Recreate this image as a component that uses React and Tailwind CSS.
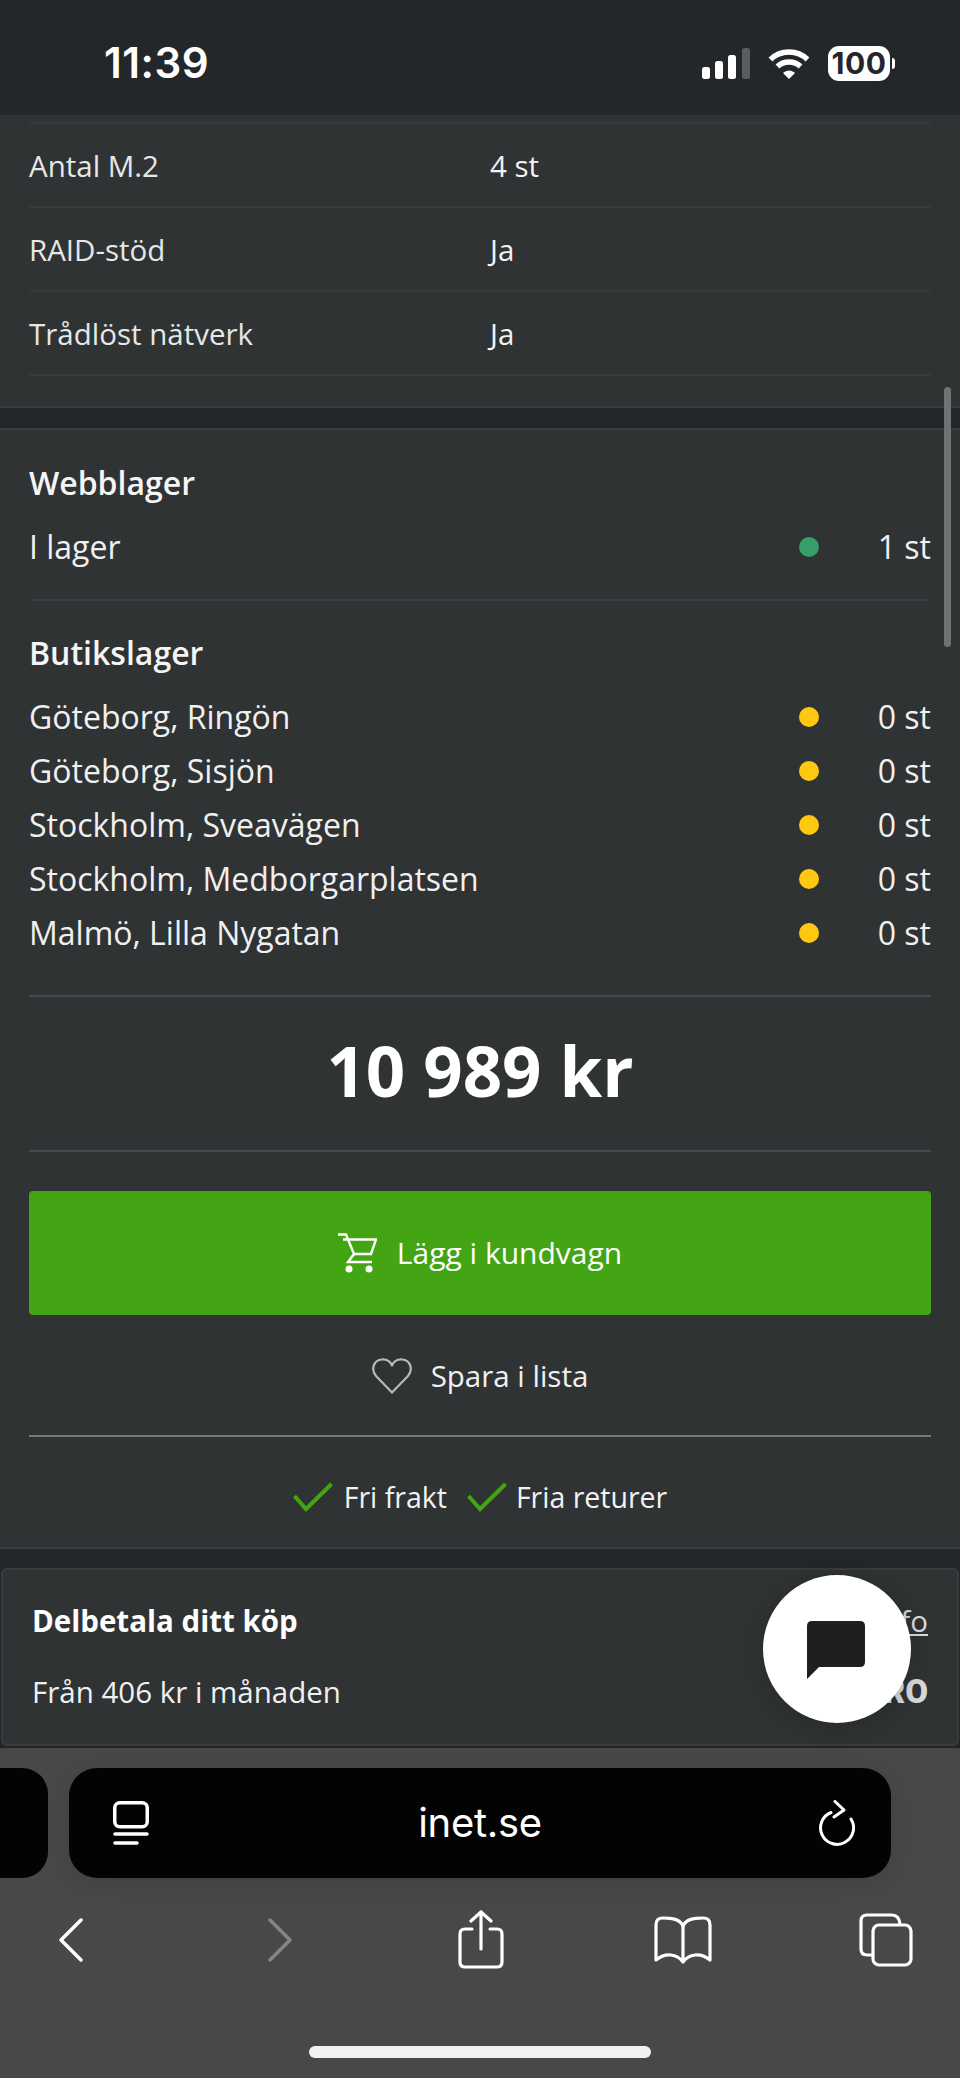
import React from "react";

const SPECS = [
  { label: "Antal M.2", value: "4 st" },
  { label: "RAID-stöd", value: "Ja" },
  { label: "Trådlöst nätverk", value: "Ja" },
];

const STORES = [
  "Göteborg, Ringön",
  "Göteborg, Sisjön",
  "Stockholm, Sveavägen",
  "Stockholm, Medborgarplatsen",
  "Malmö, Lilla Nygatan",
];

/* ================= STATUS BAR ================= */
const StatusBar = () => (
  <div className="h-[115px] shrink-0 bg-[#242729] flex items-start justify-between pl-[104px] pr-[65px] pt-[36px] font-['Inter',sans-serif] text-white">
    <span className="text-[42px] leading-[54px] font-semibold tracking-[0.5px]">11:39</span>
    <div className="flex items-center mt-[10px]">
      <svg width="48" height="32" viewBox="0 0 48 32" fill="#fff">
        <rect x="0" y="19" width="8" height="12" rx="2.5" />
        <rect x="13" y="13" width="8" height="18" rx="2.5" />
        <rect x="26" y="7" width="8" height="24" rx="2.5" />
        <rect x="40" y="0" width="8" height="31" rx="2.5" fill="#5a5c5e" />
      </svg>
      <svg className="ml-[18px]" width="42" height="32" viewBox="0 0 42 32" fill="none" stroke="#fff" strokeWidth="5.5">
        <path d="M2.5 11.5C12.5 1.5 29.5 1.5 39.5 11.5" />
        <path d="M9.5 18.5C15.5 12.5 26.5 12.5 32.5 18.5" />
        <path d="M15 25L21 31L27 25C23.5 21.5 18.5 21.5 15 25Z" fill="#fff" stroke="none" />
      </svg>
      <div className="ml-[18px] w-[62px] h-[35px] rounded-[11px] bg-white text-[#242729] flex items-center justify-center text-[30px] font-bold tracking-[0.5px]">
        100
      </div>
      <div className="ml-[2px] w-[3px] h-[11px] bg-white rounded-r-full" />
    </div>
  </div>
);

/* ================= STOCK ================= */
const StockRow = ({ name, qty, dot }) => (
  <div className="flex items-center h-[54px] text-[32px] text-[#f0f0f0]">
    <span className="flex-1">{name}</span>
    <span className={`w-5 h-5 rounded-full ${dot}`} />
    <span className="w-[112px] text-right">{qty}</span>
  </div>
);

/* ================= BROWSER CHROME ================= */
const BrowserBar = () => (
  <div className="h-[330px] shrink-0 bg-[#48484a] pt-[20px]">
    <div className="flex items-stretch h-[110px]">
      <div className="w-[48px] rounded-r-[26px] bg-[#030304]" />
      <div className="ml-[21px] w-[822px] rounded-[28px] bg-[#030304] flex items-center justify-between pl-[44px] pr-[36px] shadow-[0_4px_24px_rgba(0,0,0,0.12)]">
        <svg width="36" height="44" viewBox="0 0 36 44" fill="none" stroke="#fff" strokeWidth="3.5" strokeLinecap="round">
          <rect x="1.75" y="1.75" width="32.5" height="24" rx="5" />
          <path d="M2 33H34" />
          <path d="M2 42H24" />
        </svg>
        <span className="text-[40px] text-white font-['Inter',sans-serif] tracking-[-0.3px] -translate-x-[4px]">inet.se</span>
        <svg width="36" height="46" viewBox="0 0 36 46" fill="none" stroke="#fff" strokeWidth="3" strokeLinecap="round" strokeLinejoin="round">
          <path d="M12 12.5A16.5 16.5 0 1 0 32 19" />
          <path d="M16 1.5L25 10L15 17" />
        </svg>
      </div>
    </div>

    <div className="flex items-center h-[60px] mt-[32px] pl-[59px]">
      <svg width="24" height="44" viewBox="0 0 24 44" fill="none" stroke="#fff" strokeWidth="3.5" strokeLinecap="round" strokeLinejoin="round">
        <path d="M22 2L2 22L22 42" />
      </svg>
      <svg className="ml-[185px]" width="24" height="44" viewBox="0 0 24 44" fill="none" stroke="#858587" strokeWidth="3.5" strokeLinecap="round" strokeLinejoin="round">
        <path d="M2 2L22 22L2 42" />
      </svg>
      <svg className="ml-[166px]" width="46" height="60" viewBox="0 0 46 60" fill="none" stroke="#fff" strokeWidth="3.2" strokeLinecap="round" strokeLinejoin="round">
        <path d="M14 19H7Q2 19 2 24V52Q2 57 7 57H39Q44 57 44 52V24Q44 19 39 19H32" />
        <path d="M23 39V2" />
        <path d="M13 11L23 2L33 11" />
      </svg>
      <svg className="ml-[150px]" width="58" height="48" viewBox="0 0 58 48" fill="none" stroke="#fff" strokeWidth="3.2" strokeLinecap="round" strokeLinejoin="round">
        <path d="M29 10C26 3 18 2 9 2Q2 2 2 9V44C12 36 23 38 29 46C35 38 46 36 56 44V9Q56 2 49 2C40 2 32 3 29 10Z" />
        <path d="M29 10V45" />
      </svg>
      <svg className="ml-[147px]" width="54" height="54" viewBox="0 0 54 54" fill="none" stroke="#fff" strokeWidth="3.2" strokeLinejoin="round">
        <path d="M13 42H8Q2 42 2 36V8Q2 2 8 2H33Q40 2 41 11" />
        <rect x="14" y="12" width="38" height="40" rx="6" />
      </svg>
    </div>

    <div className="mt-[76px] mx-auto w-[342px] h-[12px] rounded-full bg-[#f2f2f2]" />
  </div>
);

/* ================= MAIN ================= */
const App = () => (
  <div className="relative w-[960px] h-[2078px] overflow-hidden bg-[#242729] font-['Open_Sans',sans-serif] text-[29.5px] flex flex-col">
    <StatusBar />

    {/* SPECS */}
    <div className="h-[293px] shrink-0 bg-[#303334] border-b-2 border-[#3a3d3f] px-[29px] pt-[7px]">
      <div className="border-t-2 border-[#383b3c]">
        {SPECS.map((spec) => (
          <div key={spec.label} className="h-[84px] pt-[2px] flex items-center border-b-2 border-[#383b3c] text-[#e6e7e7]">
            <span className="w-[461px]">{spec.label}</span>
            <span className="text-[#f2f2f2]">{spec.value}</span>
          </div>
        ))}
      </div>
    </div>

    <div className="h-[20px] shrink-0" />

    {/* STOCK + BUY */}
    <div className="h-[1121px] shrink-0 bg-[#303334] border-y-2 border-[#3a3d3f] px-[29px] pt-[33px]">
      <h3 className="h-[40px] leading-[40px] text-[32px] font-semibold text-[#f5f5f5]">Webblager</h3>
      <div className="mt-[17px]">
        <StockRow name="I lager" qty="1 st" dot="bg-[#35a06a]" />
      </div>
      <div className="mt-[25px] border-t-2 border-[#3a3d3f] pt-[32px]">
        <h3 className="h-[40px] leading-[40px] text-[32px] font-semibold text-[#f5f5f5]">Butikslager</h3>
      </div>
      <div className="mt-[17px]">
        {STORES.map((store) => (
          <StockRow key={store} name={store} qty="0 st" dot="bg-[#fdc80f]" />
        ))}
      </div>

      <div className="mt-[35px] h-[157px] pb-[5px] border-y-2 border-[#46494b] flex items-center justify-center text-[69px] font-bold text-white">
        10 989 kr
      </div>

      <button className="mt-[39px] w-full h-[124px] rounded-[4px] bg-[#43a514] flex items-center justify-center gap-[20px] font-medium text-white">
        <svg width="39" height="41" viewBox="0 0 39 41" fill="none" stroke="#fff" strokeWidth="2.4">
          <path d="M0 1.5H8L16 21L10 29H34" />
          <path d="M5 6.5H38L33 21H16" />
          <circle cx="11" cy="36" r="3.5" fill="#fff" stroke="none" />
          <circle cx="31" cy="36" r="3.5" fill="#fff" stroke="none" />
        </svg>
        <span className="text-[30px] pb-[2px]">Lägg i kundvagn</span>
      </button>

      <div className="mt-[29px] h-[64px] flex items-center justify-center gap-[19px] text-[#f0f0f0]">
        <svg width="40" height="36" viewBox="0 0 40 36" fill="none" stroke="#b8b9ba" strokeWidth="2.2" strokeLinejoin="round">
          <path d="M20 34.5L4 18C-1 12 1 2 10 1.5C15 1.2 18.5 4 20 7.5C21.5 4 25 1.2 30 1.5C39 2 41 12 36 18Z" />
        </svg>
        Spara i lista
      </div>

      <div className="mt-[27px] h-[2px] bg-[#757779]" />

      <div className="mt-[39px] flex items-center justify-center text-[28.5px] font-medium text-[#f2f2f2]">
        <svg width="40" height="30" viewBox="0 0 40 30" fill="none" stroke="#43a514" strokeWidth="4">
          <path d="M1.5 14L13 27L38.5 2" />
        </svg>
        <span className="ml-[11px]">Fri frakt</span>
        <svg className="ml-[20px]" width="40" height="30" viewBox="0 0 40 30" fill="none" stroke="#43a514" strokeWidth="4">
          <path d="M1.5 14L13 27L38.5 2" />
        </svg>
        <span className="ml-[9px]">Fria returer</span>
      </div>
    </div>

    <div className="h-[19px] shrink-0" />

    {/* DELBETALA */}
    <div className="h-[178px] shrink-0 mx-[1px] rounded-[6px] bg-[#303334] border-2 border-[#393c3d] pl-[29px] pr-[29px] pt-[29px] flex justify-between">
      <div>
        <div className="h-[44px] leading-[44px] font-bold text-white">Delbetala ditt köp</div>
        <div className="mt-[27px] h-[44px] leading-[44px] text-[#f0f0f0]">Från 406 kr i månaden</div>
      </div>
      <div className="flex flex-col items-end">
        <span className="h-[44px] leading-[44px] text-[#d8d9d9] underline">Mer info</span>
        <span className="mt-[27px] h-[44px] leading-[44px] text-[33px] font-black font-['Roboto',sans-serif] text-[#d8d9d9]">PRO</span>
      </div>
    </div>

    <div className="h-[2px] shrink-0 bg-[#222426]" />

    <BrowserBar />

    {/* SCROLLBAR */}
    <div className="absolute left-[944px] top-[387px] w-[7px] h-[260px] rounded-full bg-[#6f7173]" />

    {/* CHAT */}
    <div className="absolute left-[763px] top-[1575px] w-[148px] h-[148px] rounded-full bg-white flex items-center justify-center shadow-[0_4px_24px_rgba(0,0,0,0.2)]">
      <svg width="58" height="58" viewBox="0 0 58 58" fill="#1f1f1f" className="translate-x-[-1px] translate-y-[1px]">
        <path d="M5 0H53Q58 0 58 5V41Q58 46 53 46H12L0 58V5Q0 0 5 0Z" />
      </svg>
    </div>
  </div>
);

export default App;
